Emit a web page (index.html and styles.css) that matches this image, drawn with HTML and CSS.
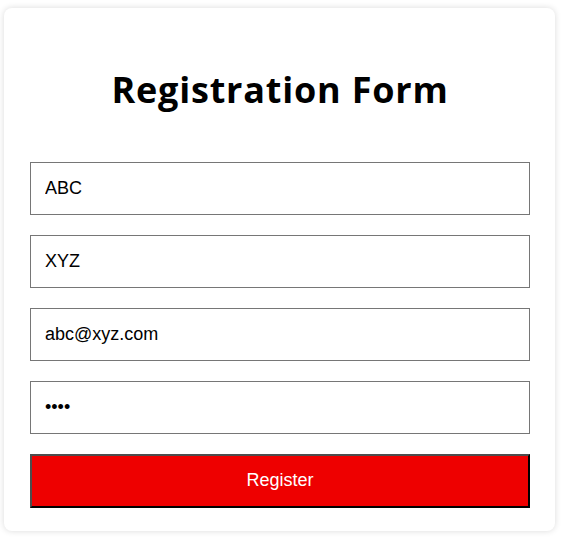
FILE: index.html
```html
<html>

<head>
	<title>Register</title>
	<link rel="stylesheet" href="styles.css">
</head>

<body>
	<div class="card">
		<h1 class="card__title">Registration Form</h1>
		<form class="form">
			<input type="text" class="input" name="firstname" value="ABC" />
			<input type="text" class="input" name="lastname" value="XYZ" />
			<input type="email" class="input" name="email" value="abc@xyz.com" />
			<input type="password" class="input" name="password" value="abcd" />
			<button type="button" class="button">Register</button>
		</form>
	</div>
</body>

</html>
```

FILE: styles.css
```css
* {
	margin: 0;
	padding: 0;
	box-sizing: border-box;
}

body {
	width: 562px;
	height: 538px;
	padding: 8px 7px 0 4px;
	background-color: #fff;
	font-family: "Liberation Sans", Arial, sans-serif;
}

.card {
	width: 551px;
	height: 523px;
	padding: 57px 25px 0 26px;
	background-color: #fff;
	border-radius: 8px;
	box-shadow: 0 0 6px rgba(0, 0, 0, 0.15);
}

.card__title {
	font-family: "Open Sans", sans-serif;
	font-size: 36px;
	font-weight: 700;
	letter-spacing: 0.8px;
	line-height: 50px;
	text-align: center;
	margin-bottom: 47px;
}

.form {
	display: flex;
	flex-direction: column;
	gap: 20px;
}

.input {
	width: 500px;
	height: 53px;
	padding: 0 14px;
	font-family: "Liberation Sans", Arial, sans-serif;
	font-size: 18px;
	color: #000;
	border: 1px solid #767676;
	outline: none;
}

.button {
	width: 500px;
	height: 54px;
	padding-bottom: 2px;
	background-color: #ee0000;
	color: #fff;
	border: 2px solid;
	border-color: #4d4d4d #000 #000 #4d4d4d;
	font-family: "Liberation Sans", Arial, sans-serif;
	font-size: 18px;
	cursor: pointer;
}
```
